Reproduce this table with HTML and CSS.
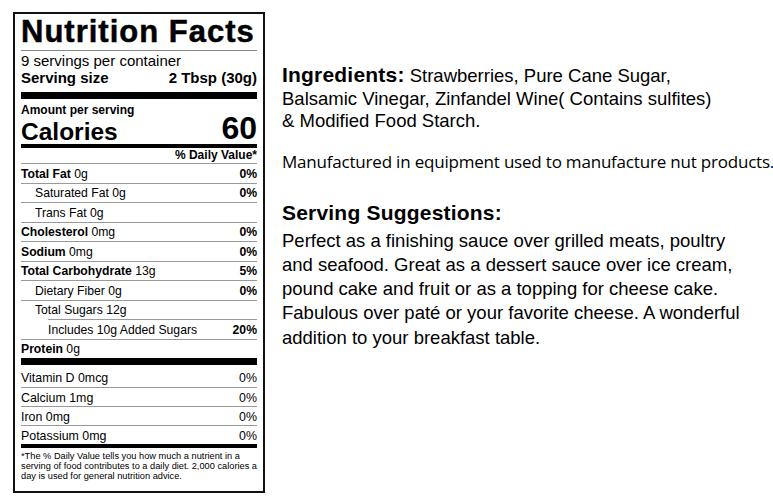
FILE: index.html
```html
<!DOCTYPE html>
<html>
<head>
<meta charset="utf-8">
<link rel="stylesheet" href="styles.css">
</head>
<body>
<div class="page">
  <div class="label">
    <div class="title">Nutrition Facts</div>
    <div class="servings">9 servings per container</div>
    <div class="size"><span>Serving size</span><span>2 Tbsp (30g)</span></div>
    <div class="bar7"></div>
    <div class="amount">Amount per serving</div>
    <div class="calories"><span class="cal-label">Calories</span><span class="cal-num">60</span></div>
    <div class="bar4"></div>
    <div class="dv">% Daily Value*</div>
    <div class="nutrients">
      <div class="row"><span><b>Total Fat</b> 0g</span><b>0%</b></div>
      <div class="row ind1"><span>Saturated Fat 0g</span><b>0%</b></div>
      <div class="row ind1"><span>Trans Fat 0g</span></div>
      <div class="row"><span><b>Cholesterol</b> 0mg</span><b>0%</b></div>
      <div class="row"><span><b>Sodium</b> 0mg</span><b>0%</b></div>
      <div class="row"><span><b>Total Carbohydrate</b> 13g</span><b>5%</b></div>
      <div class="row ind1"><span>Dietary Fiber 0g</span><b>0%</b></div>
      <div class="row ind1"><span>Total Sugars 12g</span></div>
      <div class="row ind2"><span>Includes 10g Added Sugars</span><b>20%</b></div>
      <div class="row"><span><b>Protein</b> 0g</span></div>
    </div>
    <div class="bar7"></div>
    <div class="vitamins">
      <div class="vrow first"><span>Vitamin D 0mcg</span><span>0%</span></div>
      <div class="vrow"><span>Calcium 1mg</span><span>0%</span></div>
      <div class="vrow"><span>Iron 0mg</span><span>0%</span></div>
      <div class="vrow"><span>Potassium 0mg</span><span>0%</span></div>
    </div>
    <div class="bar4"></div>
    <p class="foot">*The % Daily Value tells you how much a nutrient in a serving of food contributes to a daily diet. 2,000 calories a day is used for general nutrition advice.</p>
  </div>
  <div class="info">
    <p class="ingredients"><span class="head">Ingredients:</span> Strawberries, Pure Cane Sugar,<br>Balsamic Vinegar, Zinfandel Wine( Contains sulfites)<br>&amp; Modified Food Starch.</p>
    <p class="manuf">Manufactured in equipment used to manufacture nut products.</p>
    <h2 class="head sugg">Serving Suggestions:</h2>
    <p class="suggest">Perfect as a finishing sauce over grilled meats, poultry<br>and seafood. Great as a dessert sauce over ice cream,<br>pound cake and fruit or as a topping for cheese cake.<br>Fabulous over paté or your favorite cheese. A wonderful<br>addition to your breakfast table.</p>
  </div>
</div>
</body>
</html>
```

FILE: styles.css
```css
* { box-sizing: border-box; }
html, body { margin: 0; padding: 0; background: #fff; }
body { font-family: "Liberation Sans", Arial, sans-serif; color: #000; overflow: hidden; }
.page { display: flex; align-items: flex-start; padding: 12px 0 0 13px; }
.label {
  flex: none;
  width: 252px;
  height: 481px;
  border: 2px solid #111;
  padding: 0 6px;
  display: flex;
  flex-direction: column;
}
.title {
  font-weight: bold;
  font-size: 31px;
  letter-spacing: 1px;
  -webkit-text-stroke: 0.5px #000;
  line-height: 36px;
  height: 37px;
  white-space: nowrap;
  border-bottom: 1px solid #888;
}
.servings { font-size: 15px; line-height: 17px; margin-top: 1px; }
.size { display: flex; justify-content: space-between; font-weight: bold; font-size: 15px; line-height: 17px; }
.bar7 { height: 7px; background: #000; flex: none; }
.bar4 { height: 4px; background: #000; flex: none; }
.size + .bar7 { margin-top: 6px; }
.amount { font-weight: bold; font-size: 12px; line-height: 14px; margin-top: 4px; }
.calories { display: flex; justify-content: space-between; align-items: flex-end; font-weight: bold; height: 27px; }
.cal-label { font-size: 24.5px; line-height: 24px; }
.cal-num { font-size: 32px; line-height: 32px; }
.dv { text-align: right; font-weight: bold; font-size: 12px; line-height: 15px; height: 15px; }
.nutrients { display: flex; flex-direction: column; }
.row {
  height: 19.5px;
  border-top: 1px solid #999;
  display: flex;
  justify-content: space-between;
  align-items: center;
  font-size: 12.2px;
  padding-top: 1px;
}
.ind1 { padding-left: 14px; }
.ind2 { margin-left: 27px; }
.vitamins { display: flex; flex-direction: column; padding-top: 3px; }
.vrow {
  height: 19px;
  border-top: 1px solid #999;
  display: flex;
  justify-content: space-between;
  align-items: center;
  font-size: 12.4px;
  padding-top: 1px;
}
.vrow.first { border-top: none; }
.foot { margin: 4px 0 0; font-size: 9.25px; line-height: 9.9px; }
.info { flex: none; margin-left: 17px; padding-top: 52px; }
.info p { margin: 0; }
.head { font-weight: bold; font-size: 21px; letter-spacing: 0.2px; }
.ingredients { font-size: 18.5px; line-height: 22.5px; }
.manuf { font-family: "Open Sans", sans-serif; font-size: 17px; letter-spacing: -0.2px; line-height: 22px; margin-top: 18px !important; white-space: nowrap; }
.sugg { margin: 28px 0 4px; line-height: 24px; }
.suggest { font-size: 18.5px; line-height: 24.3px; }
```
